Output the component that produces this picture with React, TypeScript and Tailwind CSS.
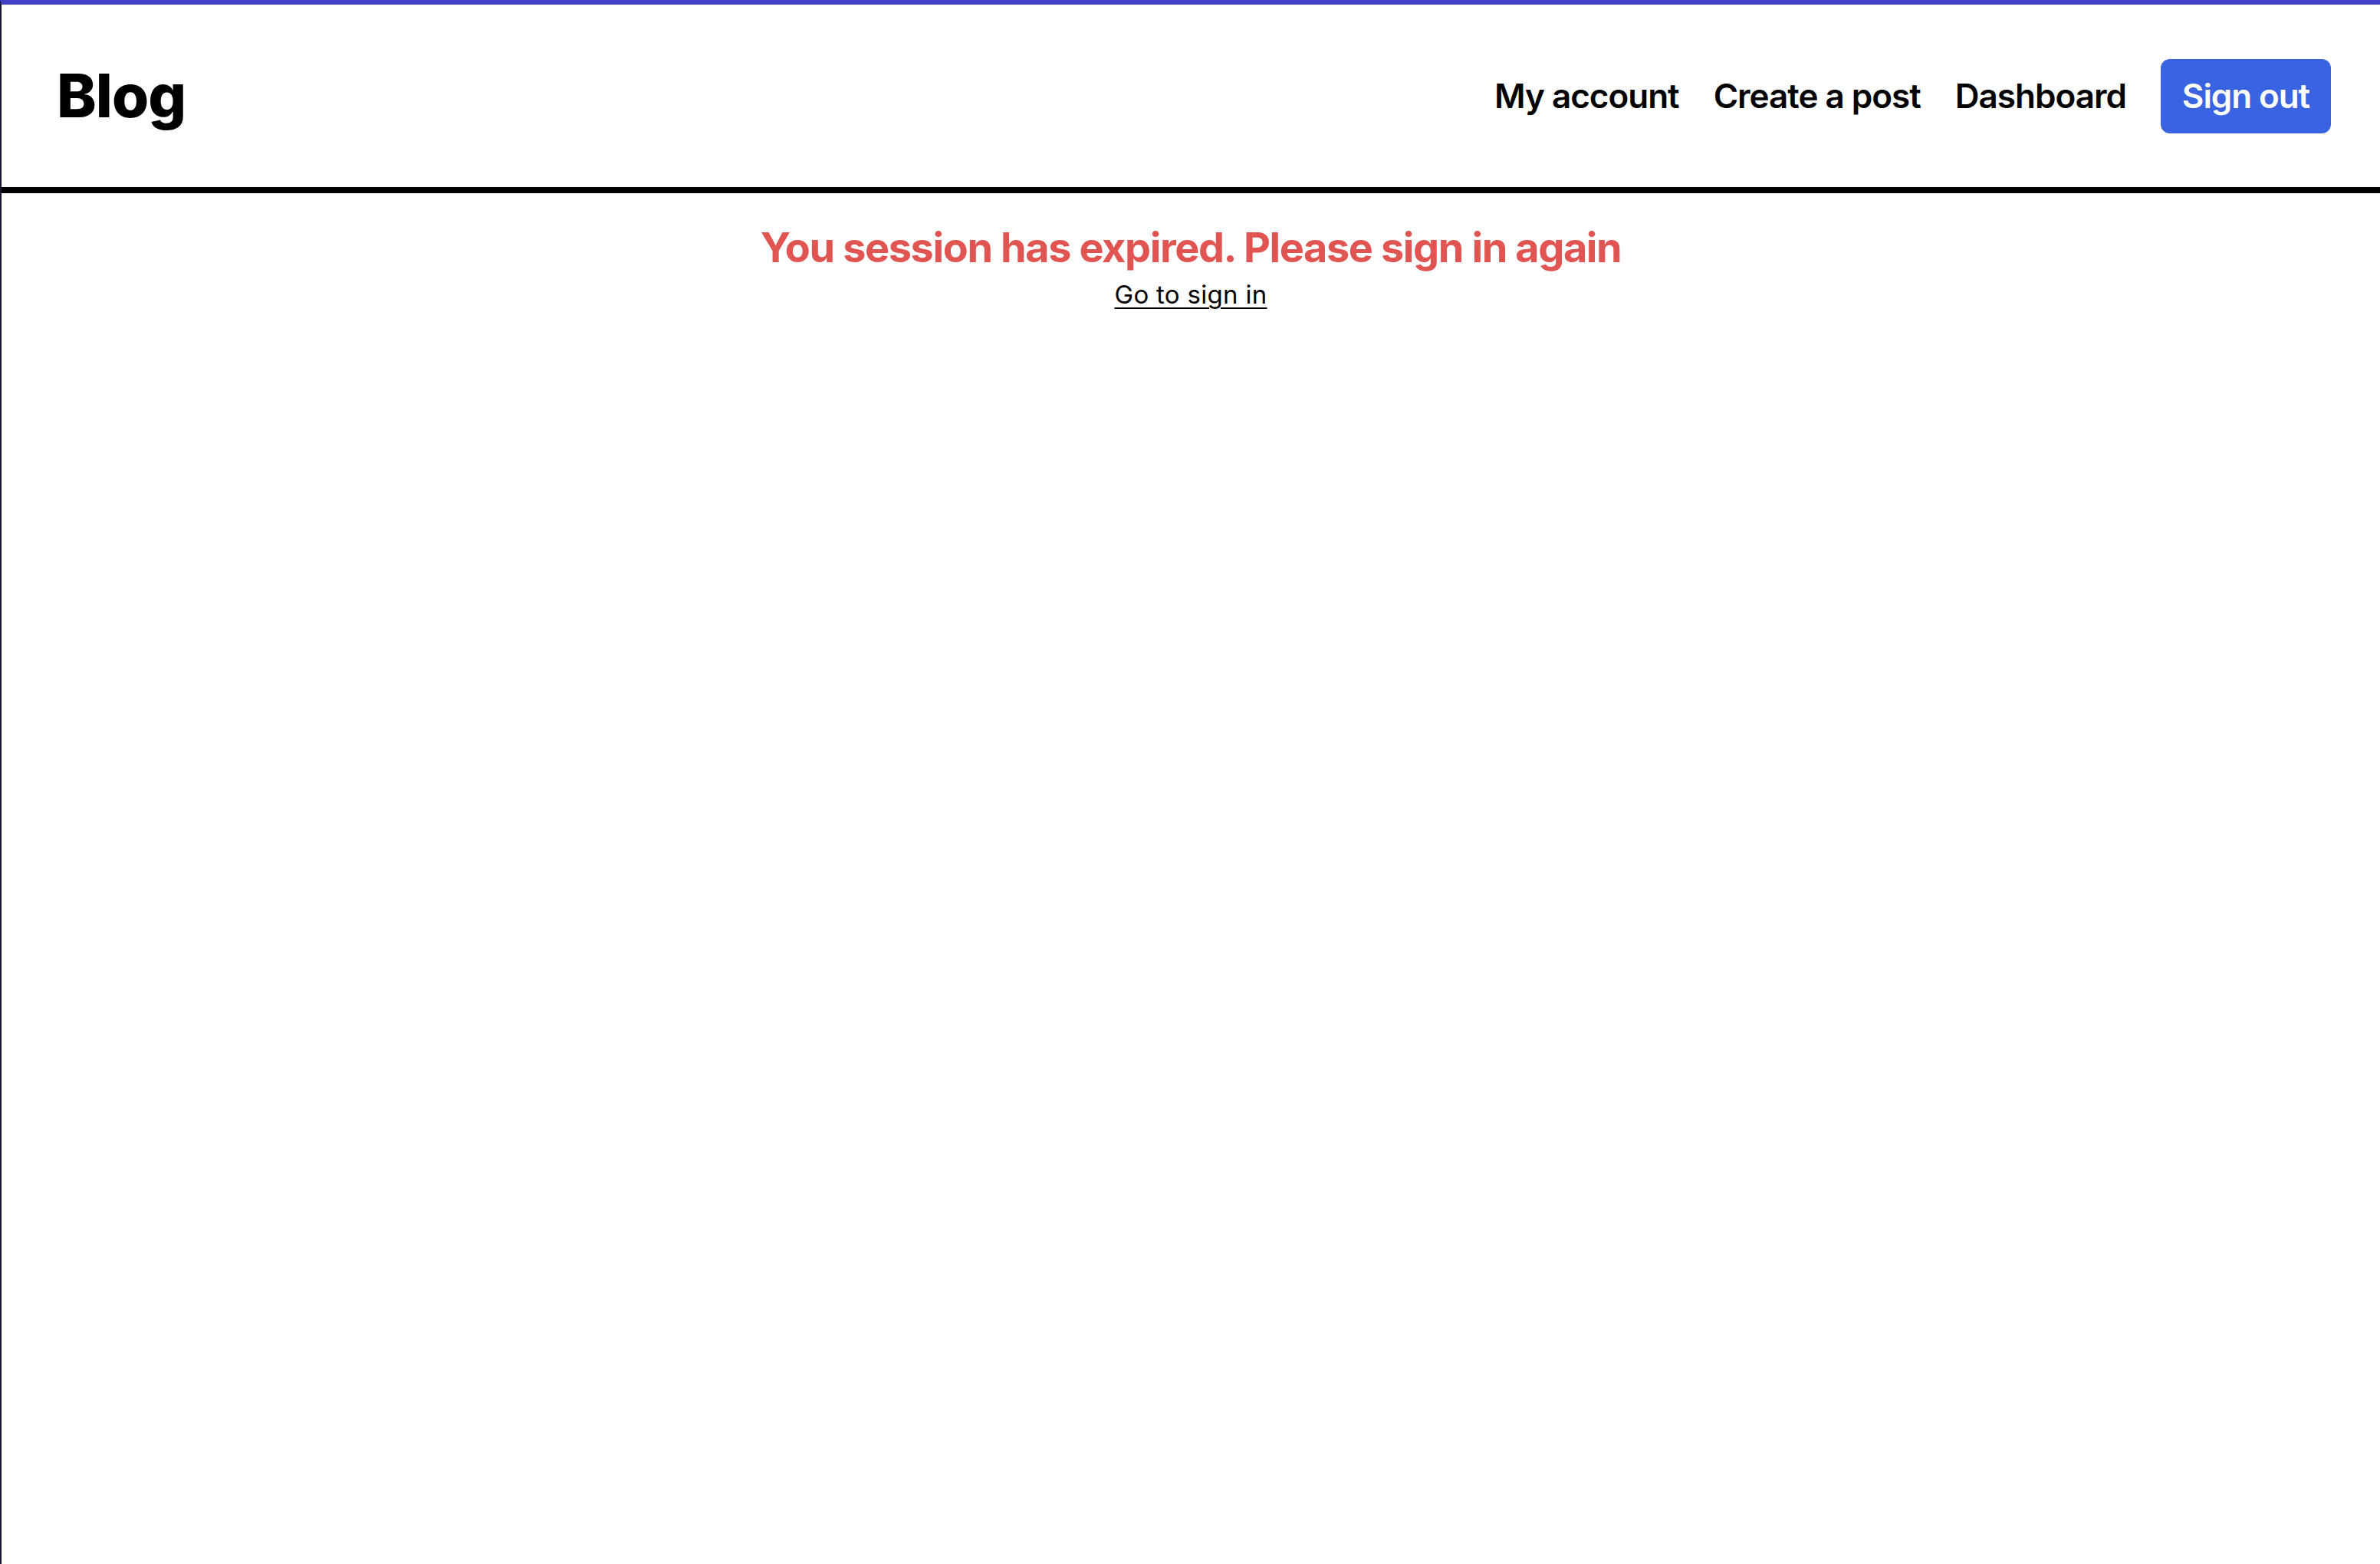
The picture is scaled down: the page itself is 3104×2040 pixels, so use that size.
import React from "react";

export default function App() {
  return (
    <div
      className="min-h-screen w-full bg-white border-t-[6px] border-l-2 border-t-[#4343c8] border-l-[#15152e] flex flex-col"
      style={{ fontFamily: "Inter, 'Noto Sans', sans-serif" }}
    >
      <header className="h-[238px] flex items-center justify-between pl-[72px] pr-[64px]">
        <a className="text-[78px] font-extrabold text-black leading-none tracking-[-1px]">Blog</a>
        <nav className="flex items-center gap-[45px]">
          <a className="text-[44px] font-semibold text-black leading-none tracking-[-1px]">My account</a>
          <a className="text-[44px] font-semibold text-black leading-none tracking-[-1px]">Create a post</a>
          <a className="text-[44px] font-semibold text-black leading-none tracking-[-1px]">Dashboard</a>
          <button className="h-[97px] px-[28px] rounded-[12px] bg-[#3a63e2] text-white text-[44px] font-semibold leading-none tracking-[-1.1px]">
            Sign out
          </button>
        </nav>
      </header>
      <div className="h-2 bg-black" />
      <main className="flex flex-col items-center pt-[35px]">
        <p className="text-[54px] leading-[72px] font-bold text-[#e05452] tracking-[-1.4px]">
          You session has expired. Please sign in again
        </p>
        <a className="text-[33px] leading-[50px] text-black underline underline-offset-[5px] decoration-2 tracking-[0.3px]">Go to sign in</a>
      </main>
    </div>
  );
}
